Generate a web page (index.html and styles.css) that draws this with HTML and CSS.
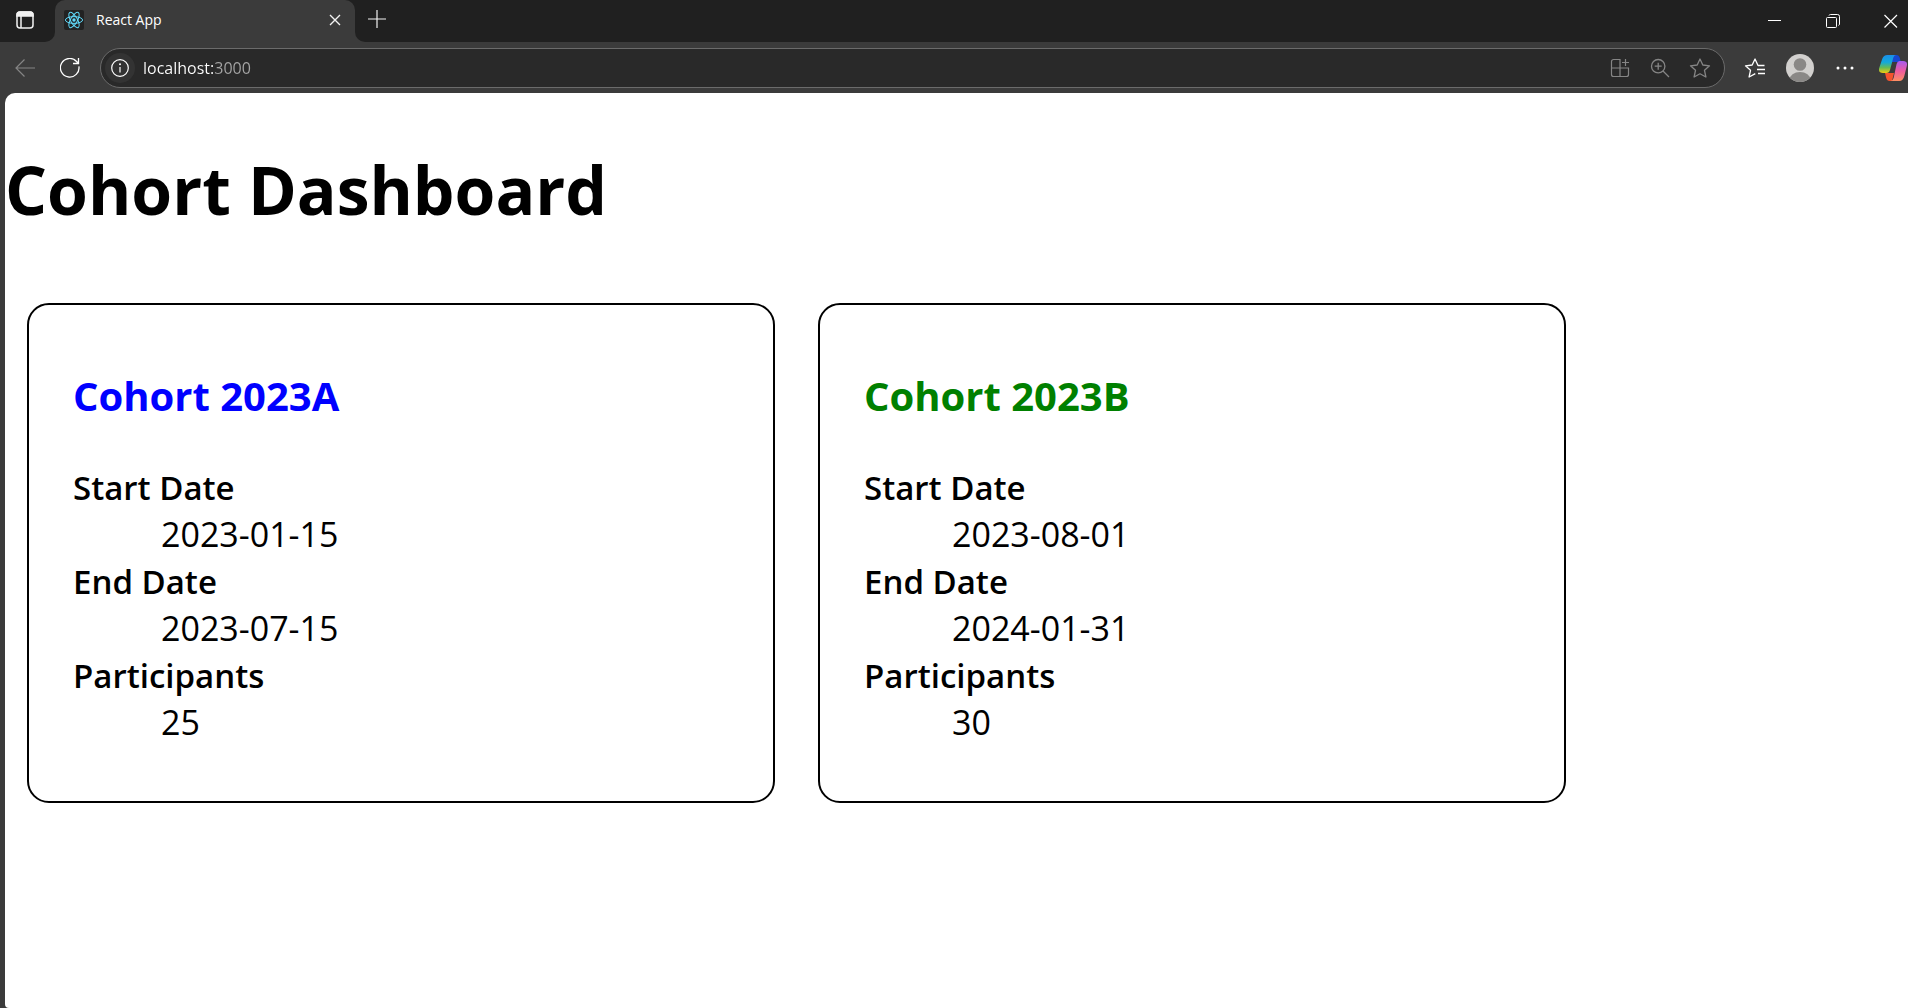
FILE: index.html
```html
<!DOCTYPE html>
<html lang="en">
<head>
<meta charset="utf-8">
<meta name="viewport" content="width=device-width, initial-scale=1">
<title>React App</title>
<link rel="stylesheet" href="styles.css">
</head>
<body>
<header class="browser">
  <div class="tab-strip">
    <div class="strip-start">
      <button class="icon-button" type="button" aria-label="Tab actions">
        <svg width="20" height="20" viewBox="0 0 20 20" fill="none" stroke="#f2f2f2" stroke-width="1.5"><rect x="2" y="2" width="16" height="16" rx="3"/><path d="M2 5a3 3 0 0 1 3-3h10a3 3 0 0 1 3 3v1H2z" fill="#f2f2f2"/><path d="M6 6v12"/></svg>
      </button>
    </div>
    <div class="tab-well">
      <div class="tab">
        <svg class="favicon" width="20" height="20" viewBox="0 0 20 20" fill="none" stroke="#61dafb"><rect width="20" height="20" rx="2" fill="#222" stroke="none"/><ellipse cx="10" cy="10" rx="8.6" ry="3.4"/><ellipse cx="10" cy="10" rx="8.6" ry="3.4" transform="rotate(60 10 10)"/><ellipse cx="10" cy="10" rx="8.6" ry="3.4" transform="rotate(120 10 10)"/><circle cx="10" cy="10" r="1.7" fill="#61dafb" stroke="none"/></svg>
        <span class="tab-title">React App</span>
        <button class="icon-button tab-close" type="button" aria-label="Close tab">
          <svg width="12" height="12" viewBox="0 0 12 12" fill="none" stroke="#f2f2f2" stroke-width="1.4"><path d="M1 1l10 10M11 1L1 11"/></svg>
        </button>
      </div>
    </div>
    <div class="strip-end">
      <button class="icon-button new-tab" type="button" aria-label="New tab">
        <svg width="18" height="18" viewBox="0 0 18 18" fill="none" stroke="#f2f2f2" stroke-width="1.2"><path d="M9 0v18M0 9h18"/></svg>
      </button>
      <div class="window-controls">
        <button class="icon-button" type="button" aria-label="Minimize">
          <svg width="14" height="14" viewBox="0 0 14 14" stroke="#fff"><path d="M0 6.5h13"/></svg>
        </button>
        <button class="icon-button" type="button" aria-label="Restore">
          <svg width="14" height="14" viewBox="0 0 14 14" fill="none" stroke="#fff"><rect x=".5" y="3.5" width="10" height="10" rx="1"/><path d="M3 1.5Q3.300.5 4.500.5H11.500a2 2 0 0 1 2 2v7.500q0 1-1 1.500"/></svg>
        </button>
        <button class="icon-button" type="button" aria-label="Close window">
          <svg width="14" height="14" viewBox="0 0 14 14" fill="none" stroke="#fff" stroke-width="1.2"><path d="M.5 1l12.500 12.500M13 1L.5 13.500"/></svg>
        </button>
      </div>
    </div>
  </div>
  <div class="toolbar">
    <button class="icon-button" type="button" aria-label="Back" disabled>
      <svg width="20" height="20" viewBox="0 0 20 20" fill="none" stroke="#858585" stroke-width="1.2"><path d="M20 10H1M9.500 1.500L1 10l8.500 8.500"/></svg>
    </button>
    <button class="icon-button" type="button" aria-label="Refresh">
      <svg width="20" height="20" viewBox="0 0 20 20" fill="none" stroke="#fff" stroke-width="1.300"><path d="M18.900 8.300A9.300 9.300 0 1 1 16.600 3.500L18.500 5.500M18.500 0v5.500H13"/></svg>
    </button>
    <div class="address-bar">
      <button class="icon-button site-info" type="button" aria-label="View site information">
        <svg width="18" height="18" viewBox="0 0 18 18" fill="none" stroke="#fff" stroke-width="1.200"><circle cx="9" cy="9" r="8.300"/><path d="M9 8v5.500"/><circle cx="9" cy="5.300" r="1" fill="#fff" stroke="none"/></svg>
      </button>
      <input class="address" type="text" value="localhost:3000" aria-label="Address" spellcheck="false">
      <button class="icon-button" type="button" aria-label="App available">
        <svg width="20" height="20" viewBox="0 0 20 20" fill="none" stroke="#858585" stroke-width="1.200"><path d="M10 18.500V1.500H3.500a2 2 0 0 0-2 2v13a2 2 0 0 0 2 2h13a2 2 0 0 0 2-2V10H1.500M15.500 1v7M12 4.500h7"/></svg>
      </button>
      <button class="icon-button" type="button" aria-label="Zoom">
        <svg width="20" height="20" viewBox="0 0 20 20" fill="none" stroke="#858585" stroke-width="1.300"><circle cx="8.200" cy="8.200" r="6.700"/><path d="M13 13l6 6M8.200 4.700v7M4.700 8.200h7"/></svg>
      </button>
      <button class="icon-button" type="button" aria-label="Add to favorites">
        <svg width="22" height="22" viewBox="0 0 22 22" fill="none" stroke="#858585" stroke-width="1.300" stroke-linejoin="round"><path d="M11 2l2.800 6 6.700.8-5 4.500 1.400 6.700L11 16.800 5.100 20l1.400-6.700-5-4.500L8.200 8z"/></svg>
      </button>
    </div>
    <div class="toolbar-actions">
      <button class="icon-button" type="button" aria-label="Favorites">
        <svg width="22" height="22" viewBox="0 0 22 22" fill="none" stroke="#fff" stroke-width="1.300" stroke-linejoin="round"><path d="M20.500 8.500H14L11 2 8.200 8l-6.700.8 5 4.500L5.100 20l6.200-3.400M13 12.500h8M14 16.500h7"/></svg>
      </button>
      <button class="icon-button" type="button" aria-label="Profile">
        <svg width="28" height="28" viewBox="0 0 28 28"><defs><clipPath id="avatar"><circle cx="14" cy="14" r="14"/></clipPath></defs><g clip-path="url(#avatar)"><path fill="#d2d0ce" d="M0 0h28v28H0z"/><circle cx="14" cy="10.500" r="6.300" fill="#8a8886"/><ellipse cx="14" cy="26" rx="10.500" ry="8" fill="#8a8886"/></g></svg>
      </button>
      <button class="icon-button" type="button" aria-label="Settings and more">
        <svg width="18" height="18" viewBox="0 0 18 18" fill="#fff"><circle cx="2" cy="9" r="1.500"/><circle cx="9" cy="9" r="1.500"/><circle cx="16" cy="9" r="1.500"/></svg>
      </button>
      <button class="icon-button copilot" type="button" aria-label="Copilot">
        <svg width="28" height="28" viewBox="0 0 28 28">
          <defs>
            <linearGradient id="cool" x1="0" y1="0" x2="0" y2="1"><stop offset="0" stop-color="#1b8ee8"/><stop offset=".4" stop-color="#12a9dc"/><stop offset=".7" stop-color="#65bb55"/><stop offset="1" stop-color="#f0cc10"/></linearGradient>
            <linearGradient id="warm" x1="0" y1="0" x2="0" y2="1"><stop offset="0" stop-color="#a65cf0"/><stop offset=".5" stop-color="#ee5ba0"/><stop offset="1" stop-color="#ff8f62"/></linearGradient>
          </defs>
          <path fill="#1747d0" d="M13 1h4.500q2.500 0 3.300 3l1 4H13z"/>
          <path fill="#f5532d" d="M6 19h9l-2 8h-2.500q-2.500 0-3.300-3z"/>
          <path fill="url(#warm)" d="M20.500 7H24q5 0 3.800 5l-2.500 10q-1.200 5-5 5h-8.500q2 0 2.800-3l3-14q.8-3 2.900-3z"/>
          <path fill="url(#cool)" d="M8.500 1H17q-2 0-2.800 3l-3.200 12q-.8 3-3.700 3H4q-5 0-3.800-5l3-9q1.300-4 5.300-4z"/>
        </svg>
      </button>
    </div>
  </div>
</header>
<main class="page">
  <h1 class="page-title">Cohort Dashboard</h1>
  <div class="cohorts">
    <section class="cohort">
      <h3 class="cohort-name ongoing">Cohort 2023A</h3>
      <dl class="details">
        <dt>Start Date</dt><dd>2023-01-15</dd>
        <dt>End Date</dt><dd>2023-07-15</dd>
        <dt>Participants</dt><dd>25</dd>
      </dl>
    </section>
    <section class="cohort">
      <h3 class="cohort-name upcoming">Cohort 2023B</h3>
      <dl class="details">
        <dt>Start Date</dt><dd>2023-08-01</dd>
        <dt>End Date</dt><dd>2024-01-31</dd>
        <dt>Participants</dt><dd>30</dd>
      </dl>
    </section>
  </div>
</main>
</body>
</html>
```
FILE: styles.css
```css
* { box-sizing: border-box; }

body {
  display: flex;
  flex-direction: column;
  min-height: 100vh;
  margin: 0;
  background: #3b3b3b;
  color: #000;
  font-family: "Open Sans", "Noto Sans", sans-serif;
}

.icon-button {
  display: flex;
  flex: none;
  align-items: center;
  justify-content: center;
  padding: 0;
  border: 0;
  background: none;
}

/* Tab strip */
.tab-strip { display: flex; height: 42px; }
.strip-start, .strip-end { display: flex; background: #202020; }
.strip-start { width: 55px; padding: 0 5px 2px 0; justify-content: center; border-bottom-right-radius: 10px; }
.strip-end { flex: 1; justify-content: space-between; border-bottom-left-radius: 10px; }
.tab-well { flex: 0 1 300px; background: linear-gradient(#202020 50%, #3b3b3b 50%); }
.tab {
  display: flex;
  align-items: center;
  height: 100%;
  padding: 0 10px 2px 9px;
  border-radius: 10px 10px 0 0;
  background: #3b3b3b;
}
.tab-title { flex: 1; padding-left: 12px; color: #fff; font-size: 14px; line-height: 20px; }
.tab-close { width: 20px; height: 20px; }
.new-tab { width: 44px; padding-bottom: 4px; }
.window-controls { display: flex; padding-right: 2px; }
.window-controls .icon-button { width: 58px; }
.window-controls .icon-button:last-child { width: 30px; margin-left: 14px; }

/* Toolbar */
.toolbar { display: flex; align-items: center; height: 51px; padding-left: 2px; }
.toolbar > .icon-button, .toolbar-actions .icon-button { width: 45px; height: 40px; }
.address-bar {
  display: flex;
  flex: 1;
  align-items: center;
  height: 40px;
  min-width: 0;
  margin: 0 7px 0 8px;
  padding: 0 4px;
  border: 1px solid #6b6b6b;
  border-radius: 20px;
  background: #292929;
}
.address-bar .icon-button { width: 40px; height: 32px; }
.address-bar .site-info { width: 30px; height: 30px; border-radius: 50%; background: #333; }
.address {
  flex: 1;
  min-width: 0;
  margin-left: 8px;
  padding: 0;
  border: 0;
  outline: 0;
  /* host is white, port is dimmed */
  background: linear-gradient(90deg, #fff 71px, #a6a6a6 71px) text;
  color: transparent;
  font: 16px/24px "Open Sans", "Noto Sans", sans-serif;
}
.toolbar-actions { display: flex; }
.toolbar-actions .copilot { width: 41px; padding-right: 1px; justify-content: flex-end; }

/* Page */
.page {
  flex: 1;
  margin-left: 5px;
  border-radius: 10px 0 0 4px;
  background: #fff;
}
.page-title { margin: 0; padding: 49px 0 44px; font-size: 66px; line-height: 95px; }
.cohorts { display: flex; flex-wrap: wrap; gap: 43px; padding: 22px; }
.cohort {
  flex: 0 1 748px;
  padding: 22px 44px 55px;
  border: 2px solid #000;
  border-radius: 22px;
}
.cohort-name { margin: 41px 0; font-size: 40px; line-height: 55px; }
.ongoing { color: blue; }
.upcoming { color: green; }
.details { margin: 0; font-size: 34px; line-height: 47px; }
.details dt { font-size: 33px; font-weight: 600; }
.details dd { margin: 0 0 0 88px; }
```
